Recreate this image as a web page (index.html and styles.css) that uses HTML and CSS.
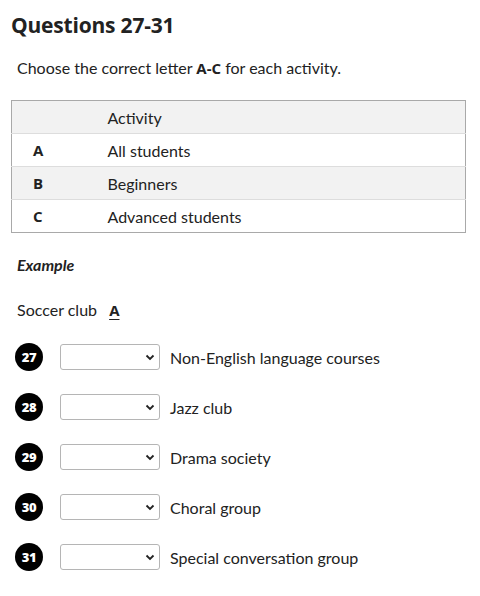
FILE: index.html
```html
<!DOCTYPE html>
<html>
<head>
<meta charset="utf-8">
<link rel="stylesheet" href="styles.css">
</head>
<body>
<div class="page">
  <h1 class="title">Questions 27-31</h1>
  <p class="instr">Choose the correct letter <b class="mont">A-C</b> for each activity.</p>
  <table class="opts">
    <tr class="shade"><td class="let"></td><td class="act">Activity</td></tr>
    <tr><td class="let">A</td><td class="act">All students</td></tr>
    <tr class="shade"><td class="let">B</td><td class="act">Beginners</td></tr>
    <tr><td class="let">C</td><td class="act">Advanced students</td></tr>
  </table>
  <p class="example">Example</p>
  <p class="soccer">Soccer club <span class="ans">A</span></p>
  <div class="qs">
    <div class="q"><span class="num">27</span><span class="sel"><svg width="10" height="7" viewBox="0 0 10 7"><path d="M1.5 1.5 L5 5 L8.5 1.5" fill="none" stroke="#222" stroke-width="1.8"/></svg></span><span class="qt">Non-English language courses</span></div>
    <div class="q"><span class="num">28</span><span class="sel"><svg width="10" height="7" viewBox="0 0 10 7"><path d="M1.5 1.5 L5 5 L8.5 1.5" fill="none" stroke="#222" stroke-width="1.8"/></svg></span><span class="qt">Jazz club</span></div>
    <div class="q"><span class="num">29</span><span class="sel"><svg width="10" height="7" viewBox="0 0 10 7"><path d="M1.5 1.5 L5 5 L8.5 1.5" fill="none" stroke="#222" stroke-width="1.8"/></svg></span><span class="qt">Drama society</span></div>
    <div class="q"><span class="num">30</span><span class="sel"><svg width="10" height="7" viewBox="0 0 10 7"><path d="M1.5 1.5 L5 5 L8.5 1.5" fill="none" stroke="#222" stroke-width="1.8"/></svg></span><span class="qt">Choral group</span></div>
    <div class="q"><span class="num">31</span><span class="sel"><svg width="10" height="7" viewBox="0 0 10 7"><path d="M1.5 1.5 L5 5 L8.5 1.5" fill="none" stroke="#222" stroke-width="1.8"/></svg></span><span class="qt">Special conversation group</span></div>
  </div>
</div>
</body>
</html>
```
FILE: styles.css
```css
* { box-sizing: border-box; }
body {
  margin: 0;
  background: #fff;
  color: #222;
  font-family: "Lato", "Noto Sans", sans-serif;
  font-size: 16px;
}
.page { padding: 11px 14px 0 11px; }
.title {
  margin: 0;
  font-family: "Open Sans", sans-serif;
  font-weight: 700;
  font-size: 21px;
  line-height: 28px;
  color: #222;
  letter-spacing: -0.2px;
}
.mont { font-family: "Open Sans", sans-serif; font-weight: 700; font-size: 15px; }
.instr {
  margin: 19px 0 0 6px;
  line-height: 20px;
}
.opts {
  margin-top: 22px;
  width: 455px;
  border-collapse: collapse;
  border: 1px solid #a9a9a9;
}
.opts td {
  height: 33px;
  padding: 0;
  border-top: 1px solid #ddd;
}
.opts tr:first-child td { border-top: none; }
.shade td { background: #f2f2f2; }
.let {
  width: 96px;
  padding-left: 21px !important;
  font-family: "Open Sans", sans-serif;
  font-weight: 700;
  font-size: 15px;
}
.example {
  margin: 22px 0 0 6px;
  font-style: italic;
  font-weight: 700;
  line-height: 20px;
}
.soccer {
  margin: 25px 0 0 6px;
  line-height: 20px;
}
.ans {
  font-family: "Open Sans", sans-serif;
  font-weight: 700;
  font-size: 15px;
  text-decoration: underline;
  text-underline-offset: 3px;
  margin-left: 8px;
}
.qs {
  margin-top: 23px;
  display: flex;
  flex-direction: column;
  gap: 22px;
}
.q {
  display: flex;
  align-items: center;
  height: 28px;
}
.num {
  width: 28px;
  height: 28px;
  border-radius: 50%;
  background: #000;
  color: #fff;
  font-family: "Open Sans", sans-serif;
  font-weight: 800;
  font-size: 13px;
  display: flex;
  align-items: center;
  justify-content: center;
  margin-left: 4px;
  letter-spacing: -0.3px;
}
.sel {
  margin-left: 17px;
  width: 100px;
  height: 26px;
  border: 1px solid #b5b5b5;
  border-radius: 3px;
  display: flex;
  align-items: center;
  justify-content: flex-end;
  padding-right: 4px;
}
.qt { margin-left: 10px; }
```
